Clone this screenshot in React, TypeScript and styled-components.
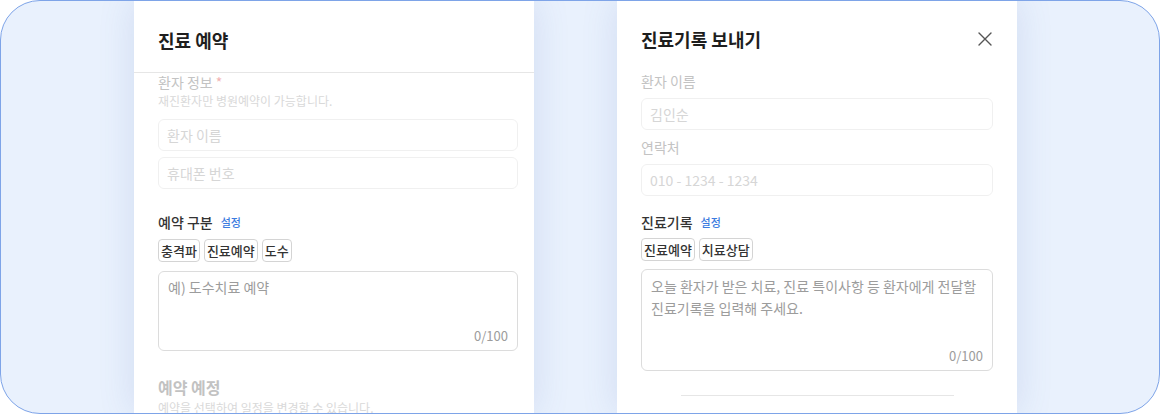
import * as React from 'react';
import styled, { createGlobalStyle } from 'styled-components';

const GlobalStyle = createGlobalStyle`
    html, body {
        margin: 0;
        padding: 0;
        background: #ffffff;
    }
    * {
        box-sizing: border-box;
    }
    body {
        font-family: "Noto Sans CJK KR", "Noto Sans", sans-serif;
        color: #222222;
    }
`

const Frame = styled.div`
    width: 1160px;
    height: 414px;
    border: 1px solid #7ea4e8;
    border-radius: 40px;
    overflow: hidden;
    background: #e9f1fd;
    display: flex;
    align-items: stretch;
    gap: 83px;
    padding-left: 133px;
`

const Panel = styled.div`
    width: 400px;
    flex: none;
    background: #ffffff;
    box-shadow: 0 0 34px rgba(80, 110, 180, 0.16);
    display: flex;
    flex-direction: column;
`

const LeftHeader = styled.div`
    height: 72px;
    flex: none;
    padding: 7px 24px 0;
    display: flex;
    align-items: center;
    border-bottom: 1px solid #e6e6e6;
`

const RightHeader = styled.div`
    flex: none;
    padding: 25px 24px 0;
    display: flex;
    align-items: center;
    justify-content: space-between;
`

const Title = styled.h1`
    margin: 0;
    font-size: 18px;
    line-height: 26px;
    font-weight: 700;
    color: #1e1e1e;
`

const CloseButton = styled.button`
    border: none;
    background: none;
    padding: 0;
    width: 16px;
    height: 16px;
    display: flex;
    align-items: center;
    justify-content: center;
    cursor: pointer;
`

const Body = styled.div<{ $right: number; $top: number }>`
    display: flex;
    flex-direction: column;
    padding: ${p => p.$top}px ${p => p.$right}px 0 24px;
`

const Label = styled.div<{ $faded?: boolean; $mt?: number }>`
    display: flex;
    align-items: center;
    gap: 8px;
    font-size: 14px;
    line-height: 18px;
    font-weight: ${p => (p.$faded ? 400 : 500)};
    margin-top: ${p => p.$mt ?? 0}px;
    color: ${p => (p.$faded ? '#c3c3c3' : '#333333')};
`

const Required = styled.span`
    color: #f2b3b3;
    margin-left: -5px;
`

const SettingLink = styled.a`
    font-size: 11px;
    font-weight: 500;
    color: #3b7be0;
    text-decoration: none;
`

const Hint = styled.div<{ $mt?: number }>`
    font-size: 12px;
    line-height: 16px;
    margin-top: ${p => p.$mt ?? 2}px;
    color: #d9d9d9;
`

const SectionTitle = styled.div`
    font-size: 16px;
    line-height: 22px;
    font-weight: 700;
    margin-top: 25px;
    color: #c2c2c2;
`

const Input = styled.input<{ $mt: number }>`
    height: 32px;
    width: 100%;
    margin-top: ${p => p.$mt}px;
    border: 1px solid #f0f0f0;
    border-radius: 6px;
    padding: 0 8px;
    font-family: inherit;
    font-size: 14px;
    background: #ffffff;
    outline: none;
    &::placeholder {
        color: #d6d6d6;
    }
`

const ChipRow = styled.div<{ $mt: number }>`
    display: flex;
    gap: 4px;
    margin-top: ${p => p.$mt}px;
`

const Chip = styled.button`
    height: 23px;
    padding: 0 2px;
    border: 1px solid #d4d4d4;
    border-radius: 4px;
    background: #ffffff;
    font-family: inherit;
    font-size: 13px;
    font-weight: 500;
    color: #333333;
    line-height: 21px;
`

const TextBox = styled.div<{ $height: number; $mt: number; $padTop: number }>`
    height: ${p => p.$height}px;
    margin-top: ${p => p.$mt}px;
    border: 1px solid #dcdcdc;
    border-radius: 6px;
    padding: ${p => p.$padTop}px 9px 5px 9px;
    display: flex;
    flex-direction: column;
`

const TextArea = styled.textarea`
    flex: 1;
    border: none;
    outline: none;
    resize: none;
    padding: 0;
    font-family: inherit;
    font-size: 14px;
    line-height: 22px;
    color: #333333;
    &::placeholder {
        color: #9c9c9c;
    }
`

const Counter = styled.div`
    text-align: right;
    font-size: 13px;
    line-height: 18px;
    color: #9c9c9c;
`

const FadedDivider = styled.div`
    width: 273px;
    height: 1px;
    margin: 24px auto 0;
    background: #e6e6e6;
`

const CloseIcon = () => (
    <svg width="14" height="14" viewBox="0 0 14 14">
        <path d="M1 1 L13 13 M13 1 L1 13" stroke="#555555" strokeWidth="1.4" strokeLinecap="round" />
    </svg>
)

const chipsA = ['충격파', '진료예약', '도수']
const chipsB = ['진료예약', '치료상담']

export default function App() {
    return (
        <React.Fragment>
            <GlobalStyle />
            <Frame>
                {/* 진료 예약 modal */}
                <Panel>
                    <LeftHeader>
                        <Title>진료 예약</Title>
                    </LeftHeader>
                    <Body $right={16} $top={0}>
                        <Label $faded>
                            환자 정보 <Required>*</Required>
                        </Label>
                        <Hint>재진환자만 병원예약이 가능합니다.</Hint>
                        <Input $mt={10} placeholder="환자 이름" />
                        <Input $mt={6} placeholder="휴대폰 번호" />

                        <Label $mt={24}>
                            예약 구분 <SettingLink href="#">설정</SettingLink>
                        </Label>
                        <ChipRow $mt={8}>
                            {chipsA.map(c => <Chip key={c}>{c}</Chip>)}
                        </ChipRow>
                        <TextBox $height={80} $mt={9} $padTop={4}>
                            <TextArea placeholder="예) 도수치료 예약" />
                            <Counter>0/100</Counter>
                        </TextBox>

                        <SectionTitle>예약 예정</SectionTitle>
                        <Hint>예약을 선택하여 일정을 변경할 수 있습니다.</Hint>
                    </Body>
                </Panel>

                {/* 진료기록 보내기 modal */}
                <Panel>
                    <RightHeader>
                        <Title>진료기록 보내기</Title>
                        <CloseButton aria-label="닫기">
                            <CloseIcon />
                        </CloseButton>
                    </RightHeader>
                    <Body $right={24} $top={20}>
                        <Label $faded>환자 이름</Label>
                        <Input $mt={8} placeholder="김인순" />
                        <Label $faded $mt={8}>연락처</Label>
                        <Input $mt={8} placeholder="010 - 1234 - 1234" />

                        <Label $mt={17}>
                            진료기록 <SettingLink href="#">설정</SettingLink>
                        </Label>
                        <ChipRow $mt={7}>
                            {chipsB.map(c => <Chip key={c}>{c}</Chip>)}
                        </ChipRow>
                        <TextBox $height={102} $mt={8} $padTop={5}>
                            <TextArea placeholder={'오늘 환자가 받은 치료, 진료 특이사항 등 환자에게 전달할\n진료기록을 입력해 주세요.'} />
                            <Counter>0/100</Counter>
                        </TextBox>
                        <FadedDivider />
                    </Body>
                </Panel>
            </Frame>
        </React.Fragment>
    )
}
